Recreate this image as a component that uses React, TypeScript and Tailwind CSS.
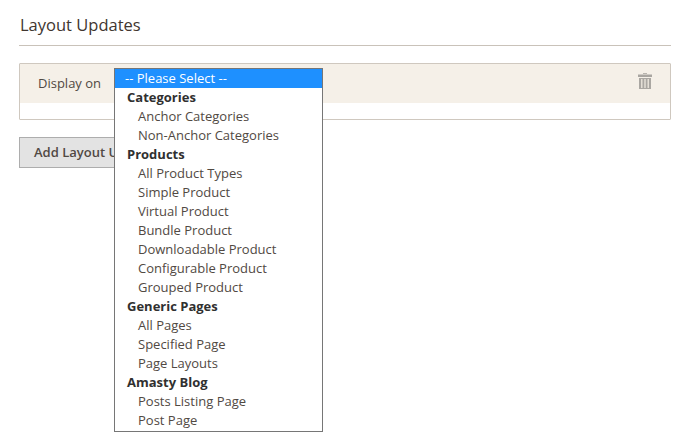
const groups = [
  { label: "Categories", items: ["Anchor Categories", "Non-Anchor Categories"] },
  {
    label: "Products",
    items: [
      "All Product Types",
      "Simple Product",
      "Virtual Product",
      "Bundle Product",
      "Downloadable Product",
      "Configurable Product",
      "Grouped Product",
    ],
  },
  { label: "Generic Pages", items: ["All Pages", "Specified Page", "Page Layouts"] },
  { label: "Amasty Blog", items: ["Posts Listing Page", "Post Page"] },
];

function TrashIcon() {
  return (
    <svg width="14" height="16" viewBox="0 0 14 16" className="mb-[6px] block">
      <rect x="5" y="0" width="4" height="1" fill="#b8b4ae" />
      <rect x="0" y="1.5" width="14" height="2.5" fill="#a9a6a1" />
      <rect x="1" y="5" width="12" height="11" fill="#aaa7a2" />
      <rect x="3" y="6" width="1.5" height="9" fill="#e4dfd6" />
      <rect x="6.25" y="6" width="1.5" height="9" fill="#e4dfd6" />
      <rect x="9.5" y="6" width="1.5" height="9" fill="#e4dfd6" />
    </svg>
  );
}

export default function App() {
  return (
    <div className="relative h-[442px] w-[685px] overflow-hidden bg-white font-['Open_Sans',sans-serif] text-[13px] text-[#41362f]">
      <div className="px-[19px] pt-[15px] pr-[14px]">
        <h2 className="border-b border-[#c9c2b9] pb-[10px] pl-px text-[16.5px] leading-[20px] font-medium text-[#41362f]">
          Layout Updates
        </h2>

        <div className="mt-[17px] h-[57px] rounded-[1px] border border-[#cfc8bf]">
          <div className="flex h-[39px] items-center justify-between bg-[#f5f0e8] pr-[18px] pl-[18px]">
            <span className="text-[#514943]">Display on</span>
            <TrashIcon />
          </div>
        </div>

        <button className="mt-[17px] h-[31px] w-[200px] border border-[#adadad] bg-[#e3e3e3] pl-[14px] text-left text-[13px] font-semibold text-[#514943]">
          Add Layout Update
        </button>
      </div>

      <div className="absolute top-[68px] left-[114px] w-[209px] border border-[#767676] bg-white pb-px">
        <div className="h-[19px] bg-[#1e90ff] pl-[10px] leading-[19px] text-white">-- Please Select --</div>
        {groups.map((group) => (
          <div key={group.label}>
            <div className="h-[19px] pl-[12px] leading-[19px] font-bold text-[#303030]">{group.label}</div>
            {group.items.map((item) => (
              <div key={item} className="h-[19px] pl-[23px] leading-[19px] text-[#514943]">
                {item}
              </div>
            ))}
          </div>
        ))}
      </div>
    </div>
  );
}
